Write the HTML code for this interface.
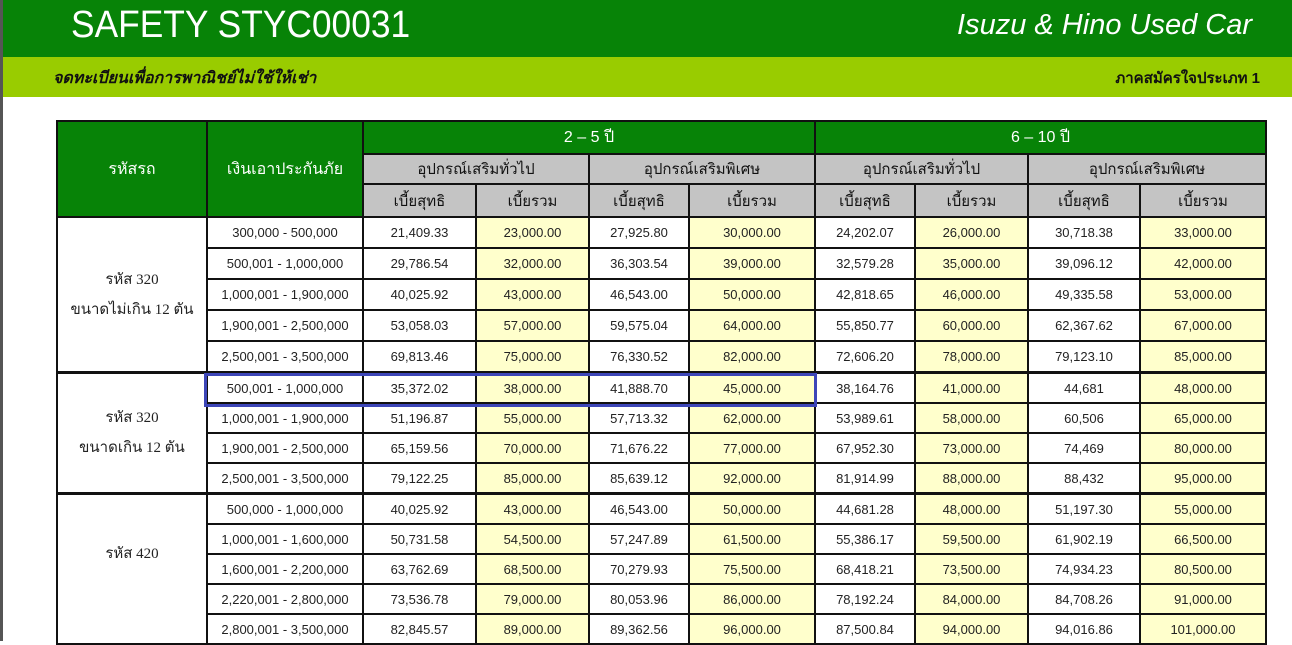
<!DOCTYPE html>
<html><head><meta charset="utf-8"><style>
body{margin:0;width:1292px;height:641px;overflow:hidden;background:#fff;font-family:"Liberation Sans","Noto Sans CJK SC",sans-serif;position:relative}
.edge{position:absolute;left:0;top:0;width:3px;height:641px;background:#555}
.h1{position:absolute;left:3px;top:0;width:1289px;height:57px;background:#078307}
.h1 .t{position:absolute;left:68px;top:4px;color:#fff;font-size:38px;transform:scaleX(0.93);transform-origin:left}
.h1 .r{position:absolute;right:40px;top:9px;color:#fff;font-size:29px;font-style:italic}
.h2{position:absolute;left:3px;top:57px;width:1289px;height:40px;background:#99cc00}
.h2 .l{position:absolute;left:50px;top:9px;font-size:16px;font-style:italic;font-weight:bold;color:#111}
.h2 .r{position:absolute;right:32px;top:9px;font-size:15px;font-weight:bold;color:#111}
table{position:absolute;left:56px;top:120px;border-collapse:collapse;table-layout:fixed;font-size:13px;color:#222}
td{border:2px solid #111;text-align:center;padding:0;height:28px}
.g{background:#078307;color:#fff;font-size:16px}
.s{background:#c4c4c4;color:#111;font-size:15px}
.y{background:#ffffcc}
.c{font-family:"Liberation Serif","Noto Serif CJK SC",serif;font-size:15px;line-height:30px}
.tb td{border-top:3px solid #111}
.a td{height:29px}
.hl{position:absolute;left:204px;top:373px;width:607px;height:28px;border:3px solid #3d46b8}
</style></head><body>
<div class="edge"></div>
<div class="h1"><div class="t">SAFETY STYC00031</div><div class="r">Isuzu &amp; Hino Used Car</div></div>
<div class="h2"><div class="l">จดทะเบียนเพื่อการพาณิชย์ไม่ใช้ให้เช่า</div><div class="r">ภาคสมัครใจประเภท 1</div></div>
<table>
<colgroup><col style="width:150px"><col style="width:156px"><col style="width:113px"><col style="width:113px"><col style="width:100px"><col style="width:126px"><col style="width:100px"><col style="width:113px"><col style="width:112px"><col style="width:126px"></colgroup>
<tr><td class="g" rowspan="3">รหัสรถ</td><td class="g" rowspan="3">เงินเอาประกันภัย</td><td class="g" colspan="4" style="height:31px">2 – 5 ปี</td><td class="g" colspan="4">6 – 10 ปี</td></tr>
<tr><td class="s" colspan="2">อุปกรณ์เสริมทั่วไป</td><td class="s" colspan="2">อุปกรณ์เสริมพิเศษ</td><td class="s" colspan="2">อุปกรณ์เสริมทั่วไป</td><td class="s" colspan="2">อุปกรณ์เสริมพิเศษ</td></tr>
<tr style="height:33px"><td class="s">เบี้ยสุทธิ</td><td class="s">เบี้ยรวม</td><td class="s">เบี้ยสุทธิ</td><td class="s">เบี้ยรวม</td><td class="s">เบี้ยสุทธิ</td><td class="s">เบี้ยรวม</td><td class="s">เบี้ยสุทธิ</td><td class="s">เบี้ยรวม</td></tr>
<tr class="a"><td rowspan="5" class="c">รหัส 320<br>ขนาดไม่เกิน 12 ตัน</td><td>300,000 - 500,000</td><td>21,409.33</td><td class="y">23,000.00</td><td>27,925.80</td><td class="y">30,000.00</td><td>24,202.07</td><td class="y">26,000.00</td><td>30,718.38</td><td class="y">33,000.00</td></tr>
<tr class="a"><td>500,001 - 1,000,000</td><td>29,786.54</td><td class="y">32,000.00</td><td>36,303.54</td><td class="y">39,000.00</td><td>32,579.28</td><td class="y">35,000.00</td><td>39,096.12</td><td class="y">42,000.00</td></tr>
<tr class="a"><td>1,000,001 - 1,900,000</td><td>40,025.92</td><td class="y">43,000.00</td><td>46,543.00</td><td class="y">50,000.00</td><td>42,818.65</td><td class="y">46,000.00</td><td>49,335.58</td><td class="y">53,000.00</td></tr>
<tr class="a"><td>1,900,001 - 2,500,000</td><td>53,058.03</td><td class="y">57,000.00</td><td>59,575.04</td><td class="y">64,000.00</td><td>55,850.77</td><td class="y">60,000.00</td><td>62,367.62</td><td class="y">67,000.00</td></tr>
<tr class="a"><td>2,500,001 - 3,500,000</td><td>69,813.46</td><td class="y">75,000.00</td><td>76,330.52</td><td class="y">82,000.00</td><td>72,606.20</td><td class="y">78,000.00</td><td>79,123.10</td><td class="y">85,000.00</td></tr>
<tr class="tb"><td rowspan="4" class="c">รหัส 320<br>ขนาดเกิน 12 ตัน</td><td>500,001 - 1,000,000</td><td>35,372.02</td><td class="y">38,000.00</td><td>41,888.70</td><td class="y">45,000.00</td><td>38,164.76</td><td class="y">41,000.00</td><td>44,681</td><td class="y">48,000.00</td></tr>
<tr><td>1,000,001 - 1,900,000</td><td>51,196.87</td><td class="y">55,000.00</td><td>57,713.32</td><td class="y">62,000.00</td><td>53,989.61</td><td class="y">58,000.00</td><td>60,506</td><td class="y">65,000.00</td></tr>
<tr><td>1,900,001 - 2,500,000</td><td>65,159.56</td><td class="y">70,000.00</td><td>71,676.22</td><td class="y">77,000.00</td><td>67,952.30</td><td class="y">73,000.00</td><td>74,469</td><td class="y">80,000.00</td></tr>
<tr><td>2,500,001 - 3,500,000</td><td>79,122.25</td><td class="y">85,000.00</td><td>85,639.12</td><td class="y">92,000.00</td><td>81,914.99</td><td class="y">88,000.00</td><td>88,432</td><td class="y">95,000.00</td></tr>
<tr class="tb"><td rowspan="5" class="c" style="vertical-align:top;padding-top:44px">รหัส 420</td><td>500,000 - 1,000,000</td><td>40,025.92</td><td class="y">43,000.00</td><td>46,543.00</td><td class="y">50,000.00</td><td>44,681.28</td><td class="y">48,000.00</td><td>51,197.30</td><td class="y">55,000.00</td></tr>
<tr><td>1,000,001 - 1,600,000</td><td>50,731.58</td><td class="y">54,500.00</td><td>57,247.89</td><td class="y">61,500.00</td><td>55,386.17</td><td class="y">59,500.00</td><td>61,902.19</td><td class="y">66,500.00</td></tr>
<tr><td>1,600,001 - 2,200,000</td><td>63,762.69</td><td class="y">68,500.00</td><td>70,279.93</td><td class="y">75,500.00</td><td>68,418.21</td><td class="y">73,500.00</td><td>74,934.23</td><td class="y">80,500.00</td></tr>
<tr><td>2,220,001 - 2,800,000</td><td>73,536.78</td><td class="y">79,000.00</td><td>80,053.96</td><td class="y">86,000.00</td><td>78,192.24</td><td class="y">84,000.00</td><td>84,708.26</td><td class="y">91,000.00</td></tr>
<tr><td>2,800,001 - 3,500,000</td><td>82,845.57</td><td class="y">89,000.00</td><td>89,362.56</td><td class="y">96,000.00</td><td>87,500.84</td><td class="y">94,000.00</td><td>94,016.86</td><td class="y">101,000.00</td></tr>
</table>
<div class="hl"></div>
</body></html>
